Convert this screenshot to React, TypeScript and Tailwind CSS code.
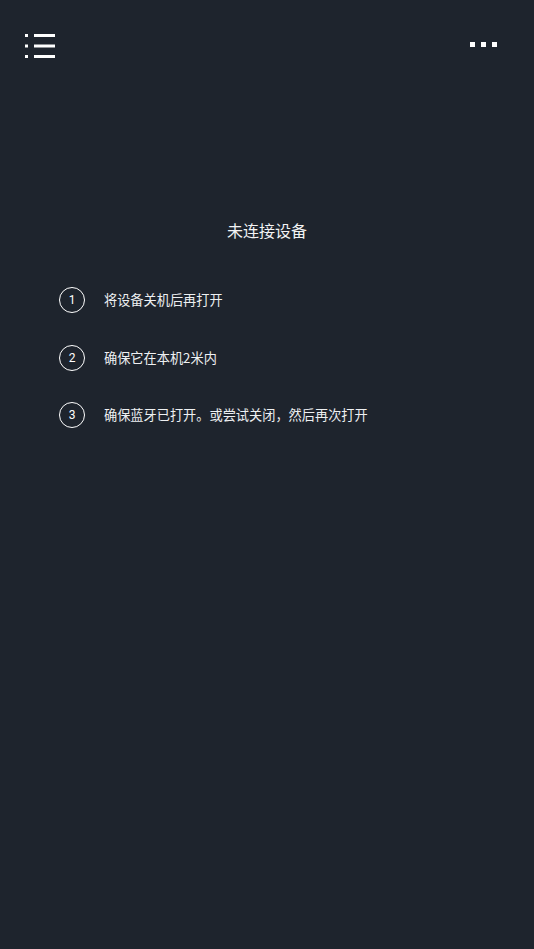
import React from "react";

const items = [
  "将设备关机后再打开",
  "确保它在本机2米内",
  "确保蓝牙已打开。或尝试关闭，然后再次打开",
];

export default function App() {
  return (
    <div
      className="w-full min-h-[949px] bg-[#1e242d] text-white"
      style={{ fontFamily: '"Noto Sans CJK SC", Roboto, "Noto Sans", sans-serif' }}
    >
      <div className="h-[91px] flex items-center justify-between pl-[25px] pr-[37px]">
        <svg width="30" height="24" viewBox="0 0 30 24" className="block">
          <rect x="0" y="0" width="3" height="3" fill="#fff" />
          <rect x="0" y="10.5" width="3" height="3" fill="#fff" />
          <rect x="0" y="21" width="3" height="3" fill="#fff" />
          <rect x="9" y="0" width="21" height="3" fill="#fff" />
          <rect x="9" y="10.5" width="21" height="3" fill="#fff" />
          <rect x="9" y="21" width="21" height="3" fill="#fff" />
        </svg>
        <div className="flex gap-[5.5px] -mt-[2px]">
          <span className="block w-[5.5px] h-[5.5px] bg-white" />
          <span className="block w-[5.5px] h-[5.5px] bg-white" />
          <span className="block w-[5.5px] h-[5.5px] bg-white" />
        </div>
      </div>
      <div className="mt-[127px] text-center text-[16px] leading-[24px] text-[#f2f3f4]">未连接设备</div>
      <div className="mt-[45px] pl-[59px] flex flex-col gap-[31.5px]">
        {items.map((t, i) => (
          <div key={i} className="flex items-center gap-[19px] h-[26px]">
            <div className="w-[26px] h-[26px] rounded-full border-[1.5px] border-white flex items-center justify-center text-[12px] leading-none text-white shrink-0" style={{ fontFamily: 'Roboto, "Noto Sans", sans-serif' }}>
              {i + 1}
            </div>
            <div className="text-[13.2px] leading-[20px] text-[#eef0f2]">{t}</div>
          </div>
        ))}
      </div>
    </div>
  );
}
